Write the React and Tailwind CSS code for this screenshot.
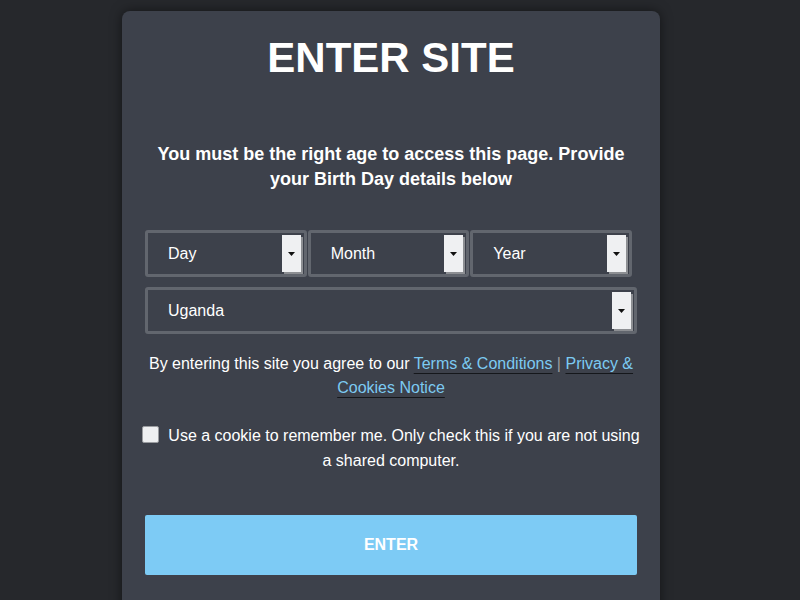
import React from 'react'

const Arrow = () => (
  <div className="w-[19px] self-stretch my-[2px] mr-[3px] bg-[#eff0f2] flex items-center justify-center shadow-[2px_2px_0_#8d8f93]">
    <svg width="7" height="4" viewBox="0 0 7 4"><path d="M0 0h7L3.5 4z" fill="#111" /></svg>
  </div>
)

const Select = ({ label, className = '' }) => (
  <div className={`h-[47px] border-[3px] border-[#62666e] rounded-[3px] flex items-stretch ${className}`}>
    <div className="flex-1 flex items-center pl-[20px] text-[16px] text-white">{label}</div>
    <Arrow />
  </div>
)

const App = () => {
  return (
    <div className="w-[800px] h-[600px] bg-[#26282c] overflow-hidden flex pt-[11px] pl-[122px]" style={{ fontFamily: '"Liberation Sans", Arial, sans-serif' }}>
      <div className="w-[538px] h-[620px] bg-[#3d414b] rounded-[8px] shadow-[0_0_12px_rgba(0,0,0,0.5)] px-[23px] flex flex-col items-center">
        <h1 className="text-white font-bold text-[42px] leading-none mt-[26px]">ENTER SITE</h1>
        <p className="text-white font-bold text-[18px] leading-[25px] text-center mt-[63px] w-[492px]">
          You must be the right age to access this page. Provide your Birth Day details below
        </p>
        <div className="w-full mt-[38px] flex gap-[1px] pr-[5px]">
          <Select label="Day" className="flex-1" />
          <Select label="Month" className="flex-1" />
          <Select label="Year" className="flex-1" />
        </div>
        <Select label="Uganda" className="w-full mt-[10px]" />
        <p className="text-white text-[16px] leading-[24px] text-center mt-[18px] w-[490px]">
          By entering this site you agree to our{' '}
          <a className="text-[#7ccaf2] underline decoration-[#15171b] underline-offset-[4px]">Terms &amp; Conditions</a>
          <span className="text-[#9a9ca2]"> | </span>
          <a className="text-[#7ccaf2] underline decoration-[#15171b] underline-offset-[4px]">Privacy &amp; Cookies Notice</a>
        </p>
        <div className="w-[504px] -mx-[6px] mt-[23px] text-white text-[16px] leading-[25px] text-center">
          <span className="inline-block w-[17px] h-[17px] bg-[#eeeff1] rounded-[2px] border border-[#9a9ca0] align-[-2px] mr-[9px]"></span>
          Use a cookie to remember me. Only check this if you are not using a shared computer.
        </div>
        <button className="w-full h-[60px] mt-[42px] bg-[#7dcbf5] rounded-[2px] text-white font-bold text-[16px]">ENTER</button>
      </div>
    </div>
  )
}

export default App
